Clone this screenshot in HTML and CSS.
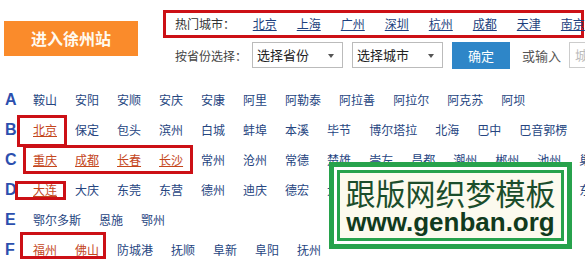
FILE: index.html
```html
<!DOCTYPE html>
<html lang="zh-CN">
<head>
  <meta charset="UTF-8">
  <title>城市选择</title>
  <link rel="stylesheet" href="styles.css">
</head>
<body>
  <div class="page">
    <div class="top">
      <a class="enter" href="#">进入徐州站</a>
      <div class="search">
        <div class="hot">
          <span class="hot-label">热门城市：</span>
          <a href="#">北京</a><a href="#">上海</a><a href="#">广州</a><a href="#">深圳</a><a href="#">杭州</a><a href="#">成都</a><a href="#">天津</a><a href="#">南京</a>
        </div>
        <div class="pick">
          <span class="pick-label">按省份选择：</span>
          <div class="select">选择省份<i class="caret"></i></div>
          <div class="select">选择城市<i class="caret"></i></div>
          <button class="ok">确定</button>
          <span class="or">或输入</span>
          <div class="city-input">城市名</div>
        </div>
      </div>
    </div>

    <div class="letters">
      <div class="row"><b class="letter">A</b><a href="#">鞍山</a><a href="#">安阳</a><a href="#">安顺</a><a href="#">安庆</a><a href="#">安康</a><a href="#">阿里</a><a href="#">阿勒泰</a><a href="#">阿拉善</a><a href="#">阿拉尔</a><a href="#">阿克苏</a><a href="#">阿坝</a></div>
      <div class="row"><b class="letter">B</b><a class="top-city" href="#">北京</a><a href="#">保定</a><a href="#">包头</a><a href="#">滨州</a><a href="#">白城</a><a href="#">蚌埠</a><a href="#">本溪</a><a href="#">毕节</a><a href="#">博尔塔拉</a><a href="#">北海</a><a href="#">巴中</a><a href="#">巴音郭楞</a></div>
      <div class="row"><b class="letter">C</b><a class="top-city" href="#">重庆</a><a class="top-city" href="#">成都</a><a class="top-city" href="#">长春</a><a class="top-city" href="#">长沙</a><a href="#">常州</a><a href="#">沧州</a><a href="#">常德</a><a href="#">楚雄</a><a href="#">崇左</a><a href="#">昌都</a><a href="#">潮州</a><a href="#">郴州</a><a href="#">池州</a><a href="#">巢湖</a></div>
      <div class="row"><b class="letter">D</b><a class="top-city" href="#">大连</a><a href="#">大庆</a><a href="#">东莞</a><a href="#">东营</a><a href="#">德州</a><a href="#">迪庆</a><a href="#">德宏</a><a href="#">大理</a><a href="#">大同</a><a href="#">丹东</a><a href="#">定西</a><a href="#">达州</a><a href="#">德阳</a><a href="#">东方</a></div>
      <div class="row"><b class="letter">E</b><a href="#">鄂尔多斯</a><a href="#">恩施</a><a href="#">鄂州</a></div>
      <div class="row"><b class="letter">F</b><a class="top-city" href="#">福州</a><a class="top-city" href="#">佛山</a><a href="#">防城港</a><a href="#">抚顺</a><a href="#">阜新</a><a href="#">阜阳</a><a href="#">抚州</a></div>
    </div>

    <!-- annotation boxes drawn over the list -->
    <div class="mark mark-b"></div>
    <div class="mark mark-c"></div>
    <div class="mark mark-d"></div>
    <div class="mark mark-f"></div>

    <div class="stamp">
      <div class="stamp-inner">
        <div class="stamp-cn">跟版网织梦模板</div>
        <div class="stamp-url">www.genban.org</div>
      </div>
    </div>
  </div>
</body>
</html>
```

FILE: styles.css
```css
body {
  margin: 0;
  background: #fff;
  font-family: "Noto Sans CJK SC", "Liberation Sans", sans-serif;
  font-size: 12px;
  color: #333;
}
a {
  text-decoration: none;
}
.page {
  position: relative;
  width: 585px;
  height: 259px;
  overflow: hidden;
}
.top {
  display: flex;
  padding: 10px 0 0 4px;
}
.enter {
  display: block;
  flex: none;
  margin-top: 11px;
  width: 134px;
  height: 35px;
  line-height: 35px;
  text-align: center;
  background: #fa8b2b;
  color: #fffaf0;
  font-size: 16px;
  font-weight: bold;
}
.search {
  flex: none;
  margin-left: 25px;
  width: 421px;
}
.hot {
  height: 22px;
  line-height: 22px;
  border: 3px solid #cc1016;
  padding-left: 9px;
  white-space: nowrap;
  color: #333;
}
.hot-label {
  margin-right: 15px;
}
.hot a {
  color: #1d3f7d;
  text-decoration: underline;
  margin-right: 20px;
}
.pick {
  display: flex;
  align-items: center;
  height: 26px;
  margin-top: 4px;
  padding-left: 12px;
  white-space: nowrap;
  font-size: 13px;
  color: #444;
}
.pick > * {
  flex: none;
}
.pick-label {
  font-size: 12px;
  margin-right: 5px;
}
.select {
  position: relative;
  box-sizing: border-box;
  width: 91px;
  height: 26px;
  line-height: 24px;
  margin-right: 9px;
  padding-left: 4px;
  border: 1px solid #bbb;
  background: #fff;
  color: #222;
}
.caret {
  position: absolute;
  right: 8px;
  top: 11px;
  border-left: 3px solid transparent;
  border-right: 3px solid transparent;
  border-top: 4px solid #555;
}
.ok {
  width: 58px;
  height: 27px;
  border: 0;
  padding: 0;
  background: #2e86c8;
  color: #fff;
  font-family: inherit;
  font-size: 13px;
}
.or {
  margin-left: 12px;
  color: #555;
}
.city-input {
  box-sizing: border-box;
  margin-left: 8px;
  width: 90px;
  height: 26px;
  line-height: 24px;
  padding-left: 5px;
  border: 1px solid #ccc;
  color: #bbb;
}
.letters {
  margin-top: 17px;
  padding-left: 5px;
}
.row {
  display: flex;
  align-items: center;
  height: 30px;
  white-space: nowrap;
}
.letter {
  flex: none;
  width: 28px;
  font-family: "Liberation Sans", Arial, sans-serif;
  font-size: 16px;
  color: #2c4fae;
}
.row a {
  flex: none;
  margin-right: 18px;
  color: #26457f;
  line-height: 16px;
}
.row a.top-city {
  color: #c4461c;
  text-decoration: underline;
}
.mark {
  position: absolute;
  box-sizing: border-box;
  border: 3px solid #cc1016;
}
.mark-b {
  left: 17px;
  top: 115px;
  width: 50px;
  height: 32px;
}
.mark-c {
  left: 23px;
  top: 145px;
  width: 170px;
  height: 29px;
}
.mark-d {
  left: 15px;
  top: 181px;
  width: 51px;
  height: 19px;
}
.mark-f {
  left: 20px;
  top: 232px;
  width: 86px;
  height: 27px;
}
.stamp {
  position: absolute;
  left: 329px;
  top: 162px;
  box-sizing: border-box;
  width: 243px;
  height: 87px;
  padding: 3px;
  border: 5px solid #27a24c;
  background: #fff;
}
.stamp-inner {
  box-sizing: border-box;
  height: 100%;
  border: 3px solid #27a24c;
  background: #fcfaee;
  display: flex;
  flex-direction: column;
  align-items: center;
  justify-content: center;
}
.stamp-cn {
  font-size: 30px;
  line-height: 32px;
  color: #1b4d2b;
}
.stamp-url {
  font-family: "Liberation Sans", Arial, sans-serif;
  font-weight: bold;
  font-size: 26px;
  line-height: 28px;
  color: #113a1d;
}
```
